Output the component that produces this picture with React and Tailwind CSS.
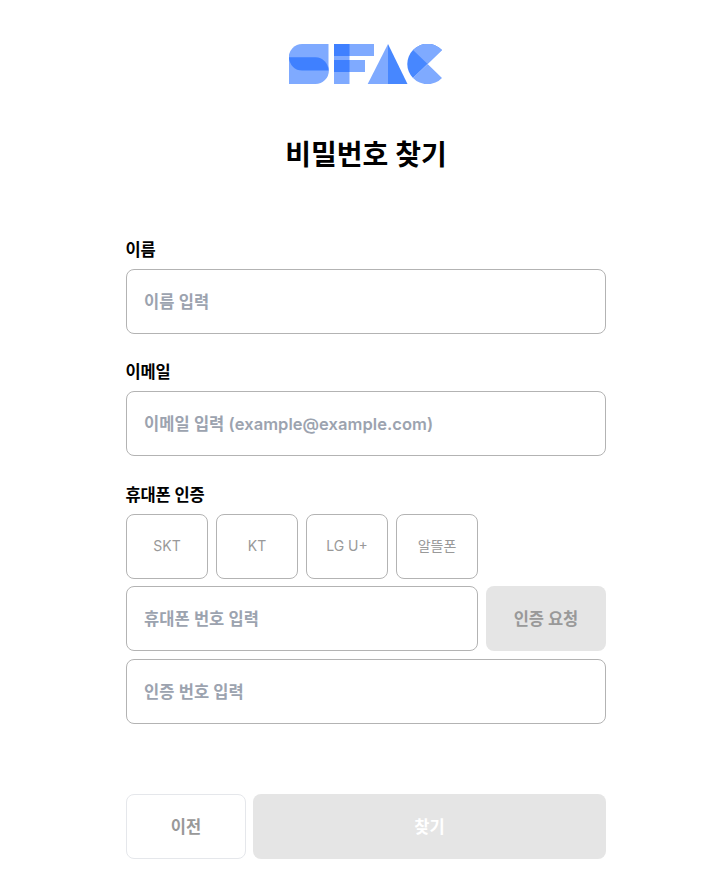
import React from 'react';

const CARRIERS = ['SKT', 'KT', 'LG U+', '알뜰폰'];

const Logo = () => (
    <svg width="154" height="40" viewBox="0 0 154 40" aria-label="SFAC">
        <path d="M13 0H39.5V26.5H13A13.25 13.25 0 0 1 13 0Z" fill="#7faaff" />
        <path d="M0 13.3H26.5A13.3 13.3 0 0 1 26.5 40H0Z" fill="#7faaff" />
        <path d="M0 13.3H26.5A13.2 13.2 0 0 1 39.5 26.5H13.2A13.2 13.2 0 0 1 0 13.3Z" fill="#3f80ff" />
        <path d="M45 0H85V12H45ZM45 16H76V28H45ZM45 0H60.5V40H45Z" fill="#7faaff" />
        <path d="M45 0H60.5V12H45ZM45 16H60.5V28H45Z" fill="#3f80ff" />
        <path d="M99 0V40H78.7Z" fill="#7faaff" />
        <path d="M99 0V40H118.5Z" fill="#4787ff" />
        <path d="M124 6A20 20 0 0 1 153 6L124 34A20 20 0 0 1 124 6Z" fill="#4787ff" />
        <path d="M124 6A20 20 0 0 1 153 6L138.6 20ZM124 34A20 20 0 0 0 153 34L138.6 20Z" fill="#7faaff" />
    </svg>
);

const Label = ({ children }) => (
    <label className="-ml-[0.5px] block h-6 pt-px text-[16.5px] leading-6 font-semibold tracking-[-0.01em] text-black">{children}</label>
);

const Input = ({ placeholder, className = 'w-full' }) => (
    <input
        placeholder={placeholder}
        className={`${className} block h-[65px] rounded-lg border border-[#b3b3b3] bg-white px-[17px] text-[16.5px] font-semibold tracking-[0.003em] placeholder:text-[#9ca3af] outline-none`}
    />
);

export default function App() {
    return (
        <main className="min-h-[891px] bg-white pl-[126px] pt-11 font-['Inter','Noto_Sans_CJK_KR',sans-serif]">
            <div className="w-[480px]">
                <div className="flex h-10 justify-center">
                    <Logo />
                </div>
                <h1 className="mt-[50px] h-[42px] text-center text-[28px] leading-[42px] font-semibold text-black">
                    비밀번호 찾기
                </h1>

                <form>
                    <div className="mt-[61px]">
                        <Label>이름</Label>
                        <div className="mt-2">
                            <Input placeholder="이름 입력" />
                        </div>
                    </div>
                    <div className="mt-[25px]">
                        <Label>이메일</Label>
                        <div className="mt-2">
                            <Input placeholder="이메일 입력 (example@example.com)" />
                        </div>
                    </div>
                    <div className="mt-[26px]">
                        <Label>휴대폰 인증</Label>
                        <div className="mt-2 flex gap-2">
                            {CARRIERS.map((carrier) => (
                                <button
                                    key={carrier}
                                    type="button"
                                    className="h-[65px] w-[82px] rounded-lg border border-[#b3b3b3] pb-0.5 text-sm text-[#999999]"
                                >
                                    {carrier}
                                </button>
                            ))}
                        </div>
                        <div className="mt-[7px] flex gap-2">
                            <Input placeholder="휴대폰 번호 입력" className="w-[352px]" />
                            <button type="button" className="h-[65px] w-[120px] rounded-lg bg-[#e5e5e5] pt-0.5 text-[16.5px] font-bold text-[#999999]">
                                인증 요청
                            </button>
                        </div>
                        <div className="mt-2">
                            <Input placeholder="인증 번호 입력" />
                        </div>
                    </div>
                    <div className="mt-[70px] flex gap-[7px]">
                        <button type="button" className="h-[65px] w-[120px] rounded-lg border border-[#e5e7eb] pt-0.5 text-[16.5px] font-bold text-[#999999]">
                            이전
                        </button>
                        <button type="button" className="h-[65px] flex-1 rounded-lg bg-[#e5e5e5] pt-0.5 text-[16.5px] font-bold text-white">
                            찾기
                        </button>
                    </div>
                </form>
            </div>
        </main>
    );
}
